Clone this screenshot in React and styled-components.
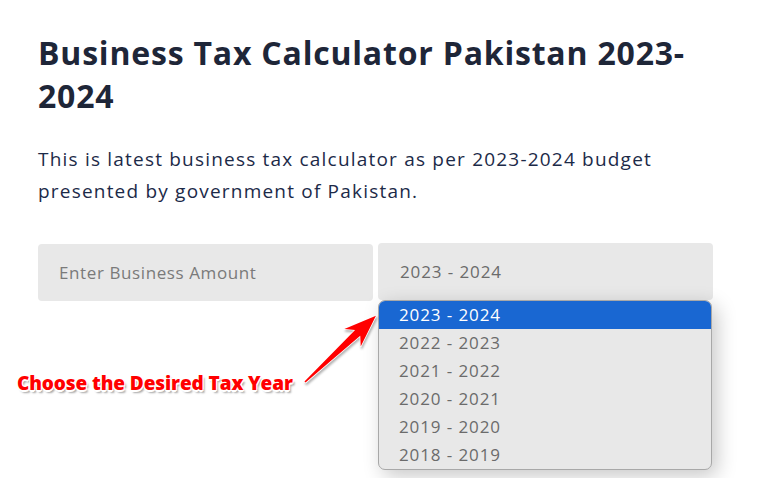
import React from "react";
import styled, { createGlobalStyle } from "styled-components";

const GlobalStyle = createGlobalStyle`
  body {
    margin: 0;
    background: #ffffff;
    font-family: "Open Sans", "Liberation Sans", sans-serif;
  }
`;

const Page = styled.div`
  position: relative;
  width: 770px;
  height: 478px;
  overflow: hidden;
  padding: 31px 57px 0 38px;
  box-sizing: border-box;
`;

const Title = styled.h1`
  margin: 0;
  font-size: 32px;
  font-weight: 700;
  line-height: 43px;
  color: #1e2638;
  letter-spacing: 0.8px;
`;

const Lead = styled.p`
  margin: 26px 0 0;
  font-size: 19px;
  line-height: 32px;
  letter-spacing: 1.2px;
  color: #1c2a48;
`;

const FormRow = styled.div`
  display: grid;
  grid-template-columns: 335px 335px;
  gap: 5px;
  margin-top: 36px;
  align-items: start;
`;

const AmountInput = styled.input`
  height: 57px;
  box-sizing: border-box;
  border: none;
  border-radius: 4px;
  background: #e8e8e8;
  padding: 0 21px;
  font-family: inherit;
  font-size: 17px;
  letter-spacing: 0.6px;
  color: #444;
  margin-top: 1px;
  outline: none;

  &::placeholder {
    color: #7a7a7a;
  }
`;

const SelectWrap = styled.div`
  position: relative;
`;

const SelectBox = styled.div`
  height: 57px;
  box-sizing: border-box;
  border-radius: 4px;
  background: #e8e8e8;
  padding: 0 22px;
  display: flex;
  align-items: center;
  font-size: 17px;
  letter-spacing: 0.9px;
  color: #6b6b6b;
`;

const Options = styled.ul`
  position: absolute;
  top: 100%;
  left: 0;
  right: 1px;
  margin: 0;
  padding: 0;
  list-style: none;
  background: #e8e8e8;
  border: 1px solid #a8a8a8;
  border-radius: 7px;
  overflow: hidden;
  box-shadow: 5px 6px 20px rgba(0, 0, 0, 0.22);
`;

const Option = styled.li`
  height: 28px;
  line-height: 28px;
  padding: 0 20px;
  font-size: 17px;
  letter-spacing: 0.9px;
  color: ${(p) => (p.$active ? "#ffffff" : "#6b6b6b")};
  background: ${(p) => (p.$active ? "#1967d2" : "transparent")};
  font-weight: ${(p) => (p.$active ? 500 : 400)};
`;

const Note = styled.div`
  position: absolute;
  left: 17px;
  top: 370px;
  font-family: "Open Sans", "DejaVu Sans", sans-serif;
  font-weight: 800;
  font-size: 19px;
  letter-spacing: -0.1px;
  color: #ff0000;
  text-shadow: -1px -1px 0 #fff, 1px -1px 0 #fff, -1px 1px 0 #fff,
    1px 1px 0 #fff, 0 2px 0 #fff, 2px 3px 2px rgba(0, 0, 0, 0.35);
`;

const Arrow = styled.svg`
  position: absolute;
  left: 0;
  top: 0;
  pointer-events: none;
  overflow: visible;
  filter: drop-shadow(1px 2px 1px rgba(0, 0, 0, 0.3));
`;

const years = [
  "2023 - 2024",
  "2022 - 2023",
  "2021 - 2022",
  "2020 - 2021",
  "2019 - 2020",
  "2018 - 2019",
];

export default function App() {
  return (
    <>
      <GlobalStyle />
      <Page>
        <Title>
          Business Tax Calculator Pakistan 2023-
          <wbr />
          2024
        </Title>
        <Lead>
          This is latest business tax calculator as per 2023-2024 budget
          presented by government of Pakistan.
        </Lead>
        <FormRow>
          <AmountInput placeholder="Enter Business Amount" />
          <SelectWrap>
            <SelectBox>2023 - 2024</SelectBox>
            <Options>
              {years.map((y, i) => (
                <Option key={y} $active={i === 0}>
                  {y}
                </Option>
              ))}
            </Options>
          </SelectWrap>
        </FormRow>
        <Note>Choose the Desired Tax Year</Note>
        <Arrow width="770" height="478" viewBox="0 0 770 478">
          <polygon
            transform="translate(305 382) rotate(-43)"
            points="0,-0.8 72,-3.8 65,-12 97,0 65,12 72,3.8 0,0.8"
            fill="#ff0000"
            stroke="#ffffff"
            strokeWidth="1.5"
            strokeLinejoin="round"
            paintOrder="stroke"
          />
        </Arrow>
      </Page>
    </>
  );
}
